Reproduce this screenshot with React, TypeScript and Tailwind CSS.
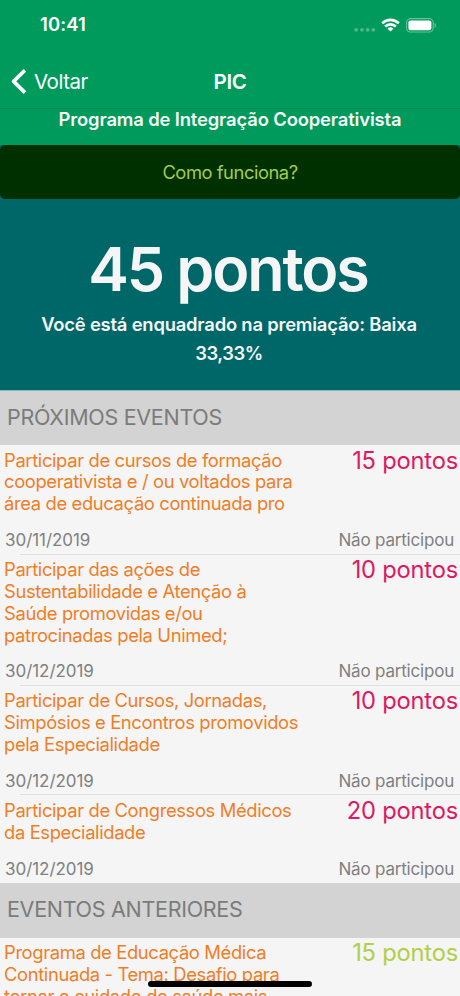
import { Fragment } from "react";

type Evento = {
  titulo: string[];
  data: string;
  pontos: string;
  status: string;
};

const proximos: Evento[] = [
  {
    titulo: [
      "Participar de cursos de formação",
      "cooperativista e / ou voltados para",
      "área de educação continuada pro",
    ],
    data: "30/11/2019",
    pontos: "15 pontos",
    status: "Não participou",
  },
  {
    titulo: [
      "Participar das ações de",
      "Sustentabilidade e Atenção à",
      "Saúde promovidas e/ou",
      "patrocinadas pela Unimed;",
    ],
    data: "30/12/2019",
    pontos: "10 pontos",
    status: "Não participou",
  },
  {
    titulo: [
      "Participar de Cursos, Jornadas,",
      "Simpósios e Encontros promovidos",
      "pela Especialidade",
    ],
    data: "30/12/2019",
    pontos: "10 pontos",
    status: "Não participou",
  },
  {
    titulo: ["Participar de Congressos Médicos", "da Especialidade"],
    data: "30/12/2019",
    pontos: "20 pontos",
    status: "Não participou",
  },
];

const anteriores: Evento[] = [
  {
    titulo: [
      "Programa de Educação Médica",
      "Continuada - Tema: Desafio para",
      "tornar o cuidado de saúde mais",
    ],
    data: "",
    pontos: "15 pontos",
    status: "",
  },
];

function StatusBar() {
  return (
    <div className="flex h-[50px] items-center justify-between pl-10 pr-[23px]">
      <span className="text-[18.5px] font-semibold tracking-[0.1px]">10:41</span>
      <div className="flex items-center">
        <svg className="h-4 w-[22px]" viewBox="0 0 22 16" fill="#fff" fillOpacity={0.3}>
          <circle cx="2.2" cy="12.8" r="1.9" />
          <circle cx="8" cy="12.8" r="1.9" />
          <circle cx="13.7" cy="12.8" r="1.9" />
          <circle cx="19.4" cy="12.8" r="1.9" />
        </svg>
        <svg className="ml-[5px] h-[14px] w-[19px]" viewBox="0 0 19 14" fill="none" stroke="#fff" strokeWidth={2.7}>
          <path d="M1.2 5.2a11.8 11.8 0 0 1 16.6 0" />
          <path d="M4.2 8.5a7.6 7.6 0 0 1 10.6 0" />
          <path d="M9.5 13.6 6.5 10.7a4.3 4.3 0 0 1 6 0z" fill="#fff" stroke="none" />
        </svg>
        <svg className="ml-[6px] h-[15px] w-[31px]" viewBox="0 0 31 15" fill="none">
          <rect x="0.6" y="0.6" width="26.6" height="13.4" rx="4" stroke="#fff" strokeOpacity={0.4} strokeWidth={1.1} />
          <rect x="2.4" y="2.4" width="23" height="9.8" rx="2.2" fill="#fff" />
          <path d="M28.7 4.9c1.4.6 1.4 4.2 0 4.8z" fill="#fff" fillOpacity={0.5} />
        </svg>
      </div>
    </div>
  );
}

function NavBar() {
  return (
    <div className="grid h-[58px] grid-cols-3 items-center pt-[5px]">
      <div className="flex items-center pl-[10px]">
        <svg className="h-[27px] w-[17px]" viewBox="0 0 17 27" fill="none" stroke="#fff" strokeWidth={3.7} strokeLinejoin="round">
          <path d="M15 2.2 3.6 13.4 15 24.6" />
        </svg>
        <span className="ml-[7px] pt-px text-[20.5px] tracking-[-0.5px]">Voltar</span>
      </div>
      <h1 className="pt-px text-center text-[20.5px] font-semibold tracking-[-0.4px]">PIC</h1>
    </div>
  );
}

function SectionHeader({ children }: { children: string }) {
  return (
    <h2 className="flex h-[54.5px] shrink-0 items-center bg-[#d3d3d3] pb-[2px] pl-[7px] text-[21.5px] text-[#7b7b7b]">
      <span className="whitespace-nowrap tracking-[-0.3px]">{children}</span>
    </h2>
  );
}

function EventoRow({ evento, last, cor }: { evento: Evento; last: boolean; cor: string }) {
  return (
    <li className="whitespace-nowrap">
      <div className="flex items-start justify-between pl-1 pr-[2px] pt-[4.5px]">
        <p className="text-[18.4px] leading-[21.85px] tracking-[-0.37px] text-[#f07e28]">
          {evento.titulo.map((linha, i) => (
            <Fragment key={linha}>
              {i > 0 && <br />}
              {linha}
            </Fragment>
          ))}
        </p>
        <span className={`text-[23.7px] leading-[22px] tracking-[-0.2px] ${cor}`}>{evento.pontos}</span>
      </div>
      <div className="mt-[14px] flex justify-between pb-[2.5px] pl-[5px] pr-[6px] text-[17px] leading-[22px] text-[#808080]">
        <span className="tracking-[-0.05px]">{evento.data}</span>
        <span className="tracking-[-0.2px]">{evento.status}</span>
      </div>
      <div className={last ? "h-px" : "ml-5 h-px bg-[#dfdfdf]"} />
    </li>
  );
}

export default function App() {
  return (
    <div className="relative flex h-[996px] w-[460px] flex-col overflow-hidden bg-[#f5f5f5] font-['Inter',sans-serif]">
      <header className="h-[145px] shrink-0 bg-[#009a5d] text-white">
        <StatusBar />
        <NavBar />
        <div className="h-[37px] border-t border-[#06894f]">
          <p className="text-center text-[18.4px] font-semibold leading-[21px] tracking-[-0.14px] text-[#f5f5f5]">
            Programa de Integração Cooperativista
          </p>
        </div>
      </header>

      <section className="h-[245.5px] shrink-0 border-b border-[#86b9b9] bg-[#006769] text-center text-[#f5f5f5]">
        <button className="block h-[54px] w-full rounded-[5px] bg-[#003000] pt-px text-[18.4px] tracking-[-0.48px] text-[#a3cb4e]">
          Como funciona?
        </button>
        <p className="mt-[34px] pr-[4px] text-[61px] font-semibold leading-[72px] tracking-[-2.1px]">45 pontos</p>
        <p className="mt-[5px] pr-[2px] text-[18.4px] font-semibold leading-[29px] tracking-[-0.2px]">
          Você está enquadrado na premiação: Baixa
          <br />
          <span className="tracking-[-0.5px]">33,33%</span>
        </p>
      </section>

      <SectionHeader>PRÓXIMOS EVENTOS</SectionHeader>
      <ul className="shrink-0">
        {proximos.map((evento, i) => (
          <EventoRow key={i} evento={evento} last={i === proximos.length - 1} cor="text-[#dc1a62]" />
        ))}
      </ul>

      <SectionHeader>EVENTOS ANTERIORES</SectionHeader>
      <ul className="shrink-0">
        {anteriores.map((evento, i) => (
          <EventoRow key={i} evento={evento} last={i === anteriores.length - 1} cor="text-[#b0cf4a]" />
        ))}
      </ul>

      {/* Home indicator */}
      <div className="absolute bottom-[9px] left-[148px] h-[6px] w-[164px] rounded-full bg-black" />
    </div>
  );
}
